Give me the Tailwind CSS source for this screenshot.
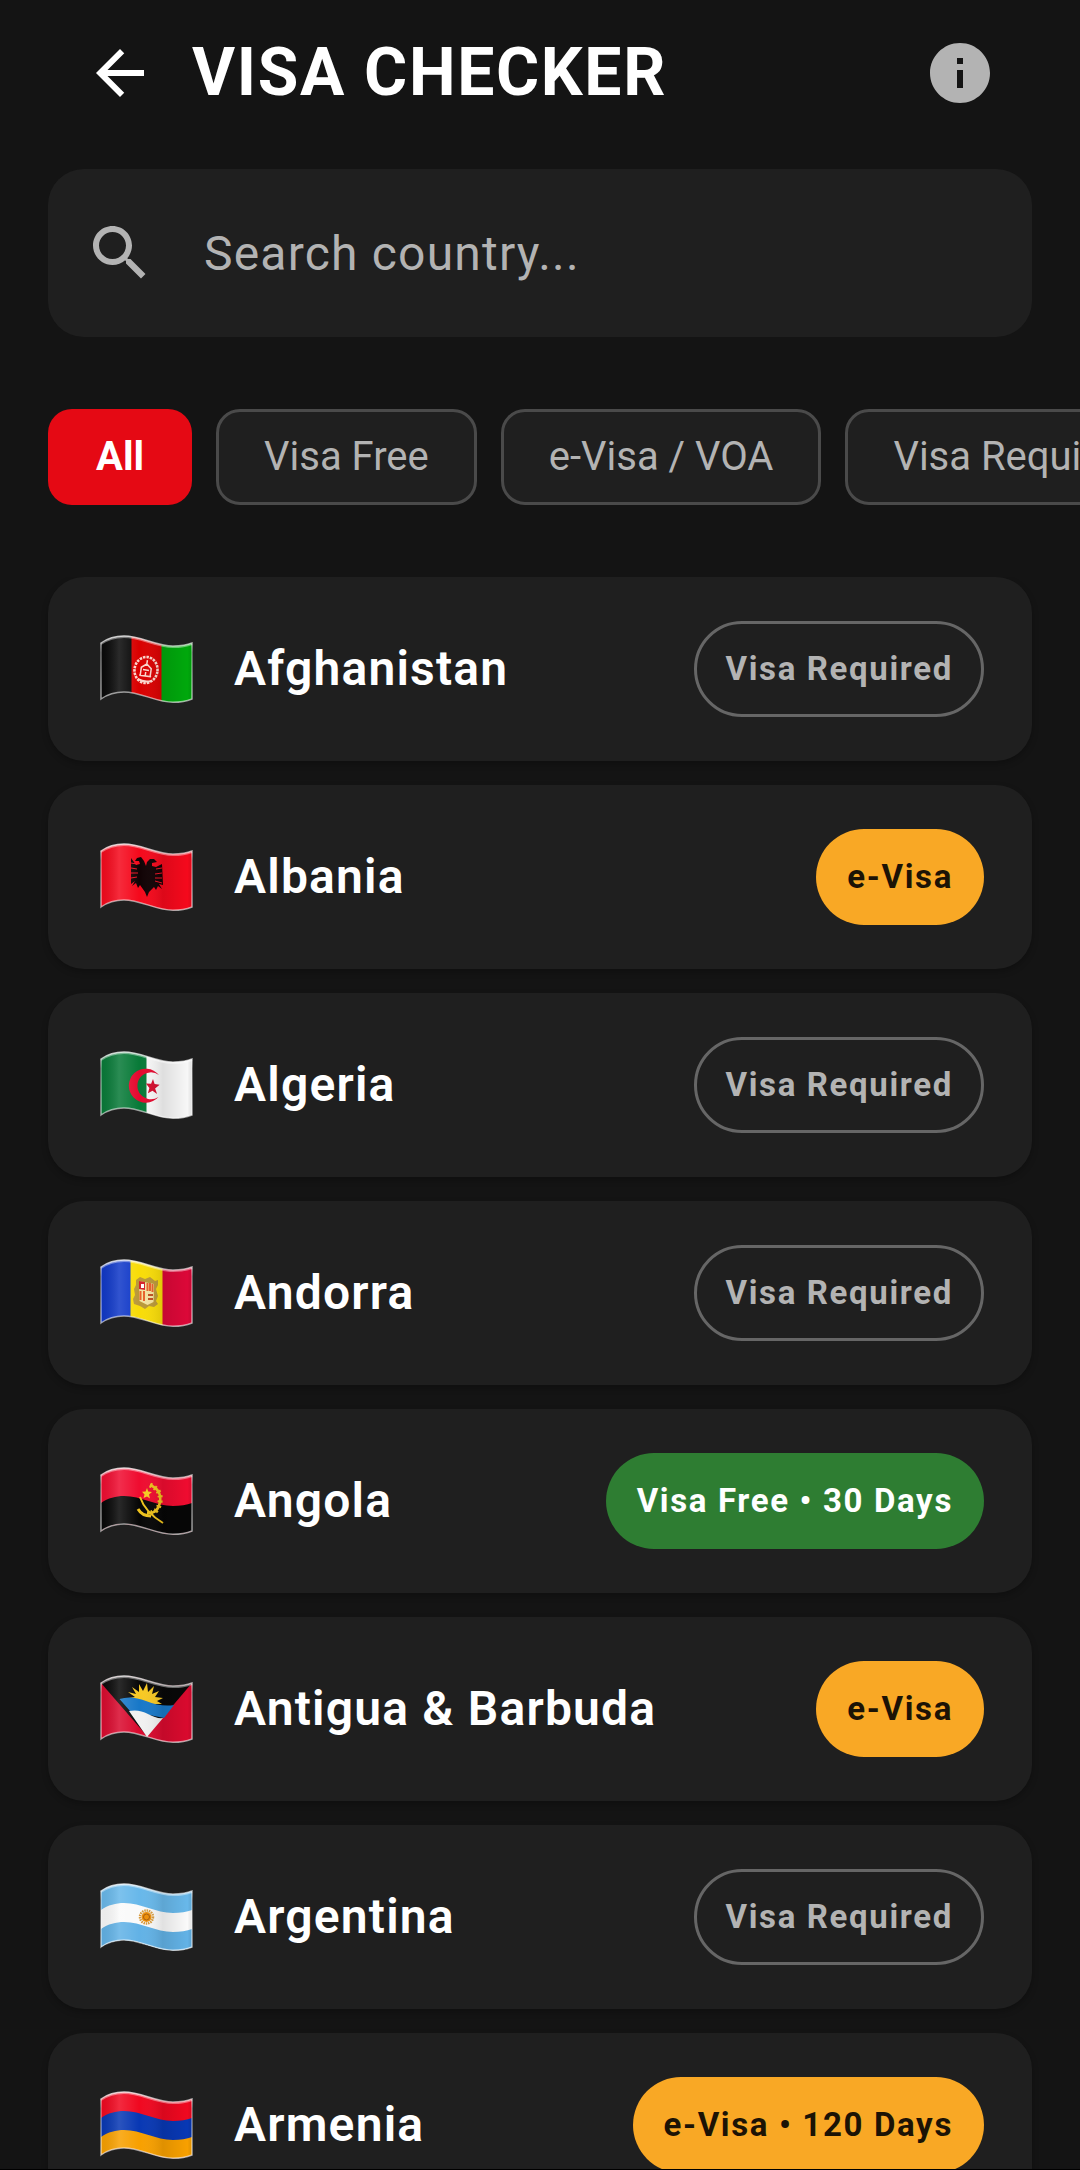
<!DOCTYPE html>
<html lang="en">
<head>
  <meta charset="UTF-8">
  <meta name="viewport" content="width=device-width, initial-scale=1.0">
  <title>Visa Checker</title>
  <script src="https://cdn.jsdelivr.net/npm/@tailwindcss/browser@4"></script>
</head>
<body class="flex h-screen flex-col overflow-hidden border-b border-black bg-[#141414] font-[Roboto,sans-serif] text-white">

  <!-- Flag artwork. Zero-sized rather than hidden, so the clip path still applies -->
  <svg class="absolute size-0" aria-hidden="true">
    <defs>
      <path id="wave" d="M5 10C12 5 20 3 28 3C45 3 60 13 77 13C84 13 91 12 96 10V66C91 68 85 69.300 77 69.300C60 69.300 45 59 28 59C20 59 12 61 5 66Z"/>
      <clipPath id="cloth"><use href="#wave"/></clipPath>
      <linearGradient id="shade">
        <stop offset="0" stop-color="#000" stop-opacity=".06"/>
        <stop offset=".2" stop-color="#fff" stop-opacity=".14"/>
        <stop offset=".42" stop-color="#fff" stop-opacity="0"/>
        <stop offset=".68" stop-color="#000" stop-opacity=".1"/>
        <stop offset=".95" stop-color="#000" stop-opacity="0"/>
        <stop offset="1" stop-color="#000" stop-opacity=".1"/>
      </linearGradient>
      <linearGradient id="rim" x2="0" y2="1">
        <stop offset="0" stop-color="#fff" stop-opacity=".75"/>
        <stop offset=".25" stop-color="#fff" stop-opacity=".4"/>
        <stop offset="1" stop-color="#fff" stop-opacity=".6"/>
      </linearGradient>
      <g id="finish">
        <use href="#wave" fill="url(#shade)"/>
        <path d="M5 11C12 6 20 4 28 4C45 4 60 14 77 14C84 14 91 13 96 11" fill="none" stroke="#fff" stroke-opacity=".4" stroke-width="2"/>
        <use href="#wave" fill="none" stroke="url(#rim)" stroke-width="1.500"/>
      </g>
    </defs>

    <symbol id="flag-af" viewBox="0 0 102 72">
      <g clip-path="url(#cloth)">
        <path fill="#080808" d="M0 0h36v72H0z"/>
        <path fill="#d90000" d="M35.500 0H66v72H35.500z"/>
        <path fill="#00a80c" d="M65.500 0H102v72H65.500z"/>
        <g transform="rotate(8 50 37)" fill="none" stroke="#fbd5cc">
          <ellipse cx="50" cy="37" rx="11.500" ry="13" stroke-width="2.600" stroke-dasharray="2.500 1"/>
          <path d="M45 43v-8l5-4 5 4v8zM50 31v-4M47 37h6M44 43h12M50 43v-4" stroke-width="1.500"/>
          <path d="M43 47q7 3 14 0" stroke-width="2"/>
        </g>
      </g>
      <use href="#finish"/>
    </symbol>

    <symbol id="flag-al" viewBox="0 0 102 72">
      <g clip-path="url(#cloth)">
        <path fill="#f5091c" d="M0 0h102v72H0z"/>
        <g transform="translate(0 1)">
          <path fill="#100204" d="M50 24L48 19L45 15L41 16L39 19L43 19L44 22L40 23L35 16L35 42L39 39L36 44L40 41L42 46L44 43L49 50L51 55L53 50L58 45L60 48L62 44L66 47L63 42L67 43L66 22L60 25L56 24L56 21L61 20L58 17L54 17L51 20Z"/>
          <path d="M35 21l6 1M35 26l6 1M35 31l7 0M35 36l6-1M66 26l-6 1M66 31l-7 1M66 36l-7 0M66 41l-7-2" stroke="#ef1224" stroke-width="1"/>
        </g>
      </g>
      <use href="#finish"/>
    </symbol>

    <symbol id="flag-dz" viewBox="0 0 102 72">
      <g clip-path="url(#cloth)">
        <path fill="#087a38" d="M0 0h51v72H0z"/>
        <path fill="#f7f7f7" d="M50.500 0H102v72H50.500z"/>
        <path fill="#e5092f" d="M63 26A17 17 0 1 0 62.500 48A13.500 13.500 0 1 1 63 26Z"/>
        <path fill="#d40d2e" d="M57 30l1.600 5 5 .8-4.500 3.600 2 5.600-4.600-3.300-4.600 2.500 1.500-5.200-3.500-4.400 5.200.2z"/>
      </g>
      <use href="#finish"/>
    </symbol>

    <symbol id="flag-ad" viewBox="0 0 102 72">
      <g clip-path="url(#cloth)">
        <path fill="#1038c8" d="M0 0h35v72H0z"/>
        <path fill="#f8dc08" d="M34.500 0H67v72H34.500z"/>
        <path fill="#dc0838" d="M66.500 0H102v72H66.500z"/>
        <path fill="#b99838" d="M40 23l4-3 5 2 5-2 5 4 3-1v5l-2 4 2 7-2 5 2 3-4 3-5-1-4 3-5-3-6-2-1-5 2-4-1-6 2-4z"/>
        <path fill="#f3e3a0" d="M43 24l15 3-.5 18-6 3-8-4z"/>
        <path fill="#d5252c" d="M43 24l6 1v8l-6-1z"/>
        <path fill="#fff" d="M45 27h3v4h-3z"/>
        <path d="M44.500 34v9M48 34v10M51.500 26v8M54 26v8M56.500 27v8" stroke="#e8622a" stroke-width="2"/>
        <path d="M52 38h5M52 42h5" stroke="#c05020" stroke-width="2"/>
      </g>
      <use href="#finish"/>
    </symbol>

    <symbol id="flag-ao" viewBox="0 0 102 72">
      <g clip-path="url(#cloth)">
        <path fill="#ef0c30" d="M0 0h102v72H0z"/>
        <use href="#wave" y="28" fill="#060606"/>
        <path d="M54 20Q66 25 64 37T51 48" fill="none" stroke="#eec21c" stroke-width="2.500"/>
        <path d="M54 20Q66 25 64 37T51 48" fill="none" stroke="#eec21c" stroke-width="5" stroke-dasharray="2 3"/>
        <path d="M44 32Q49 47 67 58" fill="none" stroke="#eec21c" stroke-width="2"/>
        <path d="M42 44Q46 51 55 51" fill="none" stroke="#eec21c" stroke-width="3"/>
        <path fill="#f6cd22" d="M51 23l1.200 3.600 3.800.4-3 2.500 1 4-3-2-3.500 1.500 1-3.600-2.500-2.700 3.600-.2z"/>
      </g>
      <use href="#finish"/>
    </symbol>

    <symbol id="flag-ag" viewBox="0 0 102 72">
      <g clip-path="url(#cloth)">
        <path fill="#d90a2e" d="M0 0h102v72H0z"/>
        <path fill="#080808" d="M5 10V0H96V10L51 63z"/>
        <path fill="#f8c923" d="M33 25l6-1-7-5 8 2-4-7 7 5 0-8 4 7 4-8 1 9 6-6-2 8 7-3-4 6 8 1-6 3 5 3H34z"/>
        <path fill="#1878c8" d="M23.500 26Q35 22 50 28T78 32L68 45L34 38z"/>
        <path fill="#f1f1f1" d="M33 38Q43 36 52 41T67 45L51 64z"/>
      </g>
      <use href="#finish"/>
    </symbol>

    <symbol id="flag-ar" viewBox="0 0 102 72">
      <g clip-path="url(#cloth)">
        <path fill="#68b8ea" d="M0 0h102v72H0z"/>
        <use href="#wave" y="19" fill="#fafafa"/>
        <use href="#wave" y="38" fill="#62b2e6"/>
        <circle cx="50.500" cy="36" r="6.500" fill="none" stroke="#d79a3c" stroke-width="2.500" stroke-dasharray="1.500 .8"/>
        <circle cx="50.500" cy="36" r="5" fill="#ee8f08"/>
        <circle cx="50.500" cy="36" r="3" fill="none" stroke="#a85c0c"/>
      </g>
      <use href="#finish"/>
    </symbol>

    <symbol id="flag-am" viewBox="0 0 102 72">
      <g clip-path="url(#cloth)">
        <path fill="#f00820" d="M0 0h102v72H0z"/>
        <use href="#wave" y="19" fill="#0838b4"/>
        <use href="#wave" y="38" fill="#f8a000"/>
      </g>
      <use href="#finish"/>
    </symbol>
  </svg>

  <!-- Top bar -->
  <header class="flex shrink-0 items-center gap-9 px-21 pt-[37px]">
    <button type="button" aria-label="Back">
      <svg class="size-18" viewBox="0 0 24 24" fill="currentColor"><path d="M20 11H7.830l5.590-5.590L12 4l-8 8 8 8 1.410-1.410L7.830 13H20v-2z"/></svg>
    </button>
    <h1 class="flex-1 text-[66px]/[72px] font-bold tracking-wide">VISA CHECKER</h1>
    <button type="button" aria-label="About" class="text-[#b3b3b3]">
      <svg class="size-18" viewBox="0 0 24 24" fill="currentColor"><path d="M12 2C6.480 2 2 6.480 2 12s4.480 10 10 10 10-4.480 10-10S17.520 2 12 2zm1 15h-2v-6h2v6zm0-8h-2V7h2v2z"/></svg>
    </button>
  </header>

  <!-- Search -->
  <label class="mx-12 mt-15 flex h-42 shrink-0 items-center gap-12 rounded-[36px] bg-[#1f1f1f] px-9 text-[#b3b3b3]">
    <svg class="size-18 shrink-0" viewBox="0 0 24 24" fill="currentColor" aria-hidden="true"><path d="M15.500 14h-.79l-.28-.27C15.410 12.590 16 11.110 16 9.500 16 5.910 13.090 3 9.500 3S3 5.910 3 9.500 5.910 16 9.500 16c1.610 0 3.090-.59 4.230-1.570l.27.28v.79l5 4.990L20.490 19l-4.990-5zm-6 0C7.010 14 5 11.990 5 9.500S7.010 5 9.500 5 14 7.010 14 9.500 11.990 14 9.500 14z"/></svg>
    <input type="text" aria-label="Search country" placeholder="Search country..." class="h-18 min-w-0 flex-1 text-5xl tracking-wide outline-none placeholder:text-[#b3b3b3]">
  </label>

  <!-- Filters -->
  <nav class="mt-18 flex shrink-0 gap-6 overflow-x-auto pl-12 text-[40px] text-[#b3b3b3] [scrollbar-width:none]" aria-label="Filter">
    <button type="button" class="h-24 shrink-0 rounded-3xl bg-[#e50914] px-12 font-bold text-white">All</button>
    <button type="button" class="h-24 shrink-0 rounded-3xl border-3 border-[#4a4a4a] bg-[#1f1f1f] px-[45px]">Visa Free</button>
    <button type="button" class="h-24 shrink-0 rounded-3xl border-3 border-[#4a4a4a] bg-[#1f1f1f] px-[45px]">e-Visa / VOA</button>
    <button type="button" class="h-24 shrink-0 rounded-3xl border-3 border-[#4a4a4a] bg-[#1f1f1f] px-[45px]">Visa Required</button>
  </nav>

  <!-- Country list -->
  <ul id="countries" class="mt-18 flex min-h-0 flex-1 flex-col gap-6 overflow-y-auto px-12 [scrollbar-width:none]"></ul>

  <script>
    const badgeStyles = {
      required: 'border-3 border-[#666] px-7 text-[#b3b3b3]',
      evisa: 'bg-[#f9a825] px-[31px] text-[#1c1305]',
      free: 'bg-[#2e7d32] px-[31px] text-white'
    };

    const countries = [
      { code: 'af', name: 'Afghanistan', type: 'required', label: 'Visa Required' },
      { code: 'al', name: 'Albania', type: 'evisa', label: 'e-Visa' },
      { code: 'dz', name: 'Algeria', type: 'required', label: 'Visa Required' },
      { code: 'ad', name: 'Andorra', type: 'required', label: 'Visa Required' },
      { code: 'ao', name: 'Angola', type: 'free', label: 'Visa Free • 30 Days' },
      { code: 'ag', name: 'Antigua &amp; Barbuda', type: 'evisa', label: 'e-Visa' },
      { code: 'ar', name: 'Argentina', type: 'required', label: 'Visa Required' },
      { code: 'am', name: 'Armenia', type: 'evisa', label: 'e-Visa • 120 Days' }
    ];

    document.getElementById('countries').innerHTML = countries.map(c => `
      <li class="flex shrink-0 items-center gap-9 rounded-[36px] bg-[#1f1f1f] px-12 py-11 shadow-[0_3px_6px_rgba(0,0,0,0.25)]">
        <svg class="h-18 w-[102px] shrink-0" aria-hidden="true"><use href="#flag-${c.code}"/></svg>
        <span class="flex-1 text-5xl font-semibold tracking-wide">${c.name}</span>
        <span class="flex h-24 items-center rounded-full text-[33px] font-bold tracking-wider ${badgeStyles[c.type]}">${c.label}</span>
      </li>`).join('');
  </script>

</body>
</html>
